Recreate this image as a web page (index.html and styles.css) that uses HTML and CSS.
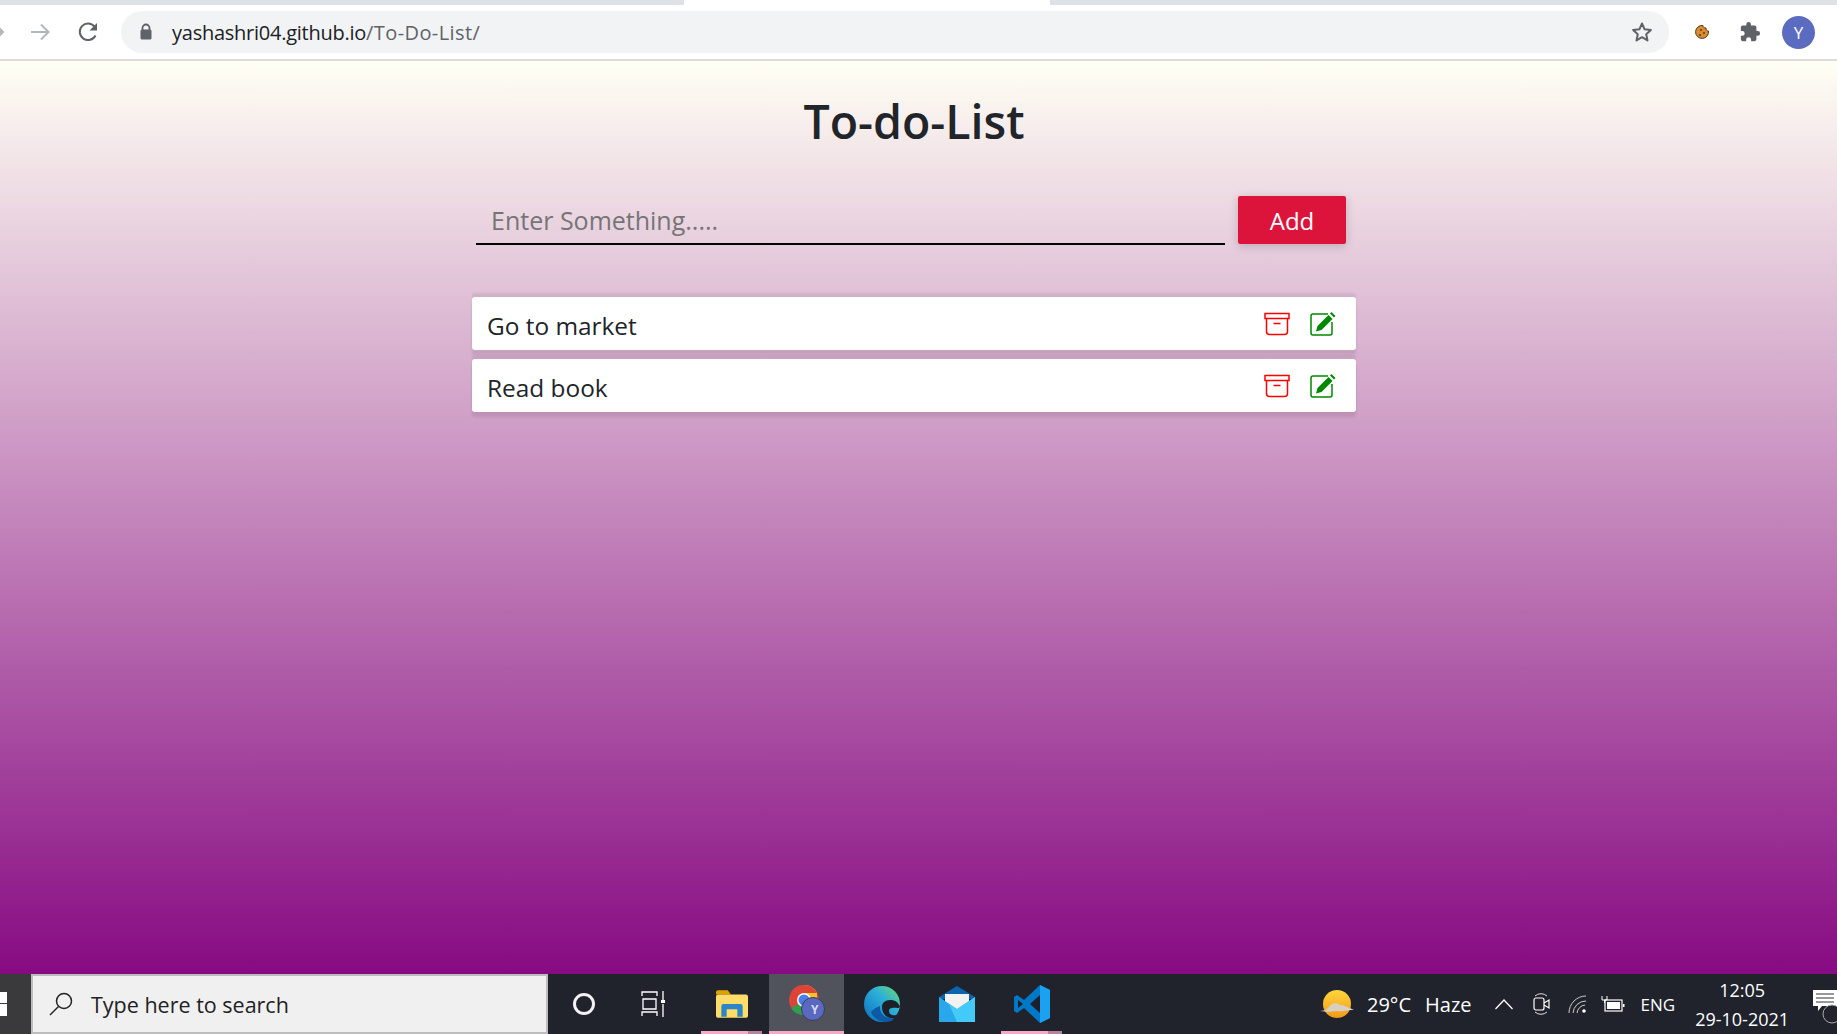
FILE: index.html
```html
<!DOCTYPE html>
<html lang="en">
<head>
    <meta charset="UTF-8">
    <title>To-do-List</title>
    <link rel="stylesheet" href="styles.css">
</head>
<body>
    <div class="tabstrip">
        <div class="tab-active"></div>
    </div>
    <div class="toolbar">
        <svg class="nav-back" width="10" height="24" viewBox="0 0 10 24"><path d="M-6 12H3M-2 7l5 5-5 5" fill="none" stroke="#b4b6b9" stroke-width="2"/></svg>
        <svg class="nav-forward" width="24" height="24" viewBox="0 0 24 24"><path d="M3 12h17M13 4.500l7.500 7.500-7.500 7.500" fill="none" stroke="#b4b6b9" stroke-width="2"/></svg>
        <svg class="nav-reload" width="24" height="24" viewBox="0 0 24 24"><path d="M19.500 15.500A8.300 8.300 0 1 1 18.500 6.500" fill="none" stroke="#5f6368" stroke-width="2"/><path d="M21 3v7.500h-7.500z" fill="#5f6368"/></svg>
        <div class="omnibox">
            <svg class="lock" width="14" height="18" viewBox="0 0 14 18"><path d="M3.500 7V5a3.500 3.500 0 0 1 7 0v2" fill="none" stroke="#5f6368" stroke-width="1.800"/><rect x="1.500" y="6.500" width="11" height="10" rx="1.500" fill="#5f6368"/></svg>
            <span class="url"><span class="host">yashashri04.github.io</span><span class="path">/To-Do-List/</span></span>
            <svg class="star" width="24" height="24" viewBox="0 0 24 24"><path d="M12 3.500l2.600 5.800 6.300.7-4.700 4.200 1.300 6.200-5.500-3.200-5.500 3.200 1.300-6.200L3.100 10l6.300-.7z" fill="none" stroke="#5f6368" stroke-width="2" stroke-linejoin="round"/></svg>
        </div>
        <svg class="cookie" width="16" height="16" viewBox="0 0 16 16"><path d="M9 1.500a2.500 2.500 0 0 0 3 2.500 2.500 2.500 0 0 0 2.500 3A6.500 6.500 0 1 1 9 1.500z" fill="#d98a35" stroke="#5c3a12"/><circle cx="7" cy="6" r="1" fill="#5c3a12"/><circle cx="10" cy="9" r="1" fill="#5c3a12"/><circle cx="6" cy="11" r="1" fill="#5c3a12"/></svg>
        <svg class="puzzle" width="22" height="22" viewBox="0 0 24 24"><path d="M20.500 11H19V7a2 2 0 0 0-2-2h-4V3.500a2.500 2.500 0 0 0-5 0V5H4a2 2 0 0 0-2 2v3.800h1.500a2.700 2.700 0 0 1 0 5.400H2V20a2 2 0 0 0 2 2h3.800v-1.500a2.700 2.700 0 0 1 5.400 0V22H17a2 2 0 0 0 2-2v-4h1.500a2.500 2.500 0 0 0 0-5z" fill="#5f6368"/></svg>
        <div class="avatar">Y</div>
    </div>
    <div class="toolbar-line"></div>

    <main class="page">
        <div class="todo">
            <h1 class="title">To-do-List</h1>
            <form class="add-form">
                <input class="add-input" type="text" placeholder="Enter Something.....">
                <button class="add-btn" type="button">Add</button>
            </form>
            <ul class="todo-list">
                <li class="todo-item">
                    <span class="todo-text">Go to market</span>
                    <svg class="icon-archive" width="26" height="24" viewBox="0 0 26 24"><rect x="1" y="1.500" width="24" height="5" fill="none" stroke="#f00" stroke-width="1.500"/><path d="M2.500 6.500v13a3 3 0 0 0 3 3h15a3 3 0 0 0 3-3v-13M9.500 11.500h7" fill="none" stroke="#f00" stroke-width="1.500"/></svg>
                    <svg class="icon-edit" width="26" height="24" viewBox="0 0 26 24"><path d="M18 2H3a2 2 0 0 0-2 2v17a2 2 0 0 0 2 2h17a2 2 0 0 0 2-2V10" fill="none" stroke="#080" stroke-width="1.500"/><path d="M6 19.500l1.500-5.500L18.500 3l4 4L11.500 18zM20 1.500L21.500 0l4 4L24 5.500z" fill="#080"/></svg>
                </li>
                <li class="todo-item">
                    <span class="todo-text">Read book</span>
                    <svg class="icon-archive" width="26" height="24" viewBox="0 0 26 24"><rect x="1" y="1.500" width="24" height="5" fill="none" stroke="#f00" stroke-width="1.500"/><path d="M2.500 6.500v13a3 3 0 0 0 3 3h15a3 3 0 0 0 3-3v-13M9.500 11.500h7" fill="none" stroke="#f00" stroke-width="1.500"/></svg>
                    <svg class="icon-edit" width="26" height="24" viewBox="0 0 26 24"><path d="M18 2H3a2 2 0 0 0-2 2v17a2 2 0 0 0 2 2h17a2 2 0 0 0 2-2V10" fill="none" stroke="#080" stroke-width="1.500"/><path d="M6 19.500l1.500-5.500L18.500 3l4 4L11.500 18zM20 1.500L21.500 0l4 4L24 5.500z" fill="#080"/></svg>
                </li>
            </ul>
        </div>
    </main>

    <footer class="taskbar">
        <div class="start">
            <span class="win-logo"></span>
        </div>
        <div class="search">
            <svg width="26" height="26" viewBox="0 0 26 26"><circle cx="16" cy="10" r="7.500" fill="none" stroke="#222" stroke-width="1.500"/><path d="M10.500 15.500L2 24" stroke="#222" stroke-width="1.500"/></svg>
            <span>Type here to search</span>
        </div>
        <div class="task-icons">
            <div class="task cortana"><span class="ring"></span></div>
            <div class="task task-view">
                <svg width="24" height="26" viewBox="0 0 24 26"><path d="M1 5V1h15v4M1 25v-4h15v4M2 8h13v10H2zM22 0v9M22 13v13" fill="none" stroke="#fff" stroke-width="1.300"/><rect x="20" y="9" width="4" height="3" fill="#fff"/></svg>
            </div>
            <div class="task running">
                <svg width="32" height="28" viewBox="0 0 30 26"><path d="M0 2a2 2 0 0 1 2-2h9l3 4H0z" fill="#e0a100"/><rect y="4" width="30" height="22" rx="2" fill="#fddc6a"/><path d="M5 25V15a2 2 0 0 1 2-2h16a2 2 0 0 1 2 2v10h-5v-7H10v7z" fill="#2b86c8"/></svg>
            </div>
            <div class="task current">
                <svg width="38" height="38" viewBox="0 0 38 38"><circle cx="16" cy="16" r="15" fill="#db4437"/><path d="M3 24a15 15 0 0 0 13 7l8-14H16z" fill="#2e9e50"/><path d="M16 1a15 15 0 0 1 13 8v9H16z" fill="#f6c02c"/><path d="M16 1a15 15 0 0 0-13 7l6 8 7-7h13a15 15 0 0 0-13-8z" fill="#db4437"/><circle cx="16" cy="16" r="7" fill="#fff"/><circle cx="16" cy="16" r="5.500" fill="#4a7fe8"/><circle cx="25" cy="25" r="11.500" fill="#5b68c0" stroke="#3b3e55"/></svg>
                <span class="chrome-letter">Y</span>
            </div>
            <div class="task">
                <svg width="36" height="38" viewBox="0 0 36 38"><defs><linearGradient id="edge" x1="0" y1="1" x2="1" y2="0"><stop offset="0" stop-color="#0a6fc0"/><stop offset=".6" stop-color="#2db0d8"/><stop offset="1" stop-color="#6fdc6a"/></linearGradient></defs><circle cx="18" cy="19" r="18" fill="url(#edge)"/><path d="M36 22c-2-6-6-7-10-7-5 0-8 3-8 7 0 7 5 12 12 11l3-3c-4 1-8 0-8-4 0-2 1-3 3-3 3-1 6 1 8-1z" fill="#1e2029"/><path d="M7 27c3 8 12 12 20 9 1 0 2-1 3-3-7 1-15-3-14-12-3 1-7 3-9 6z" fill="#0c59a4"/></svg>
            </div>
            <div class="task">
                <svg width="36" height="36" viewBox="0 0 36 36"><path d="M0 11L18 0l18 11v2H0z" fill="#0a64b0"/><path d="M6 8h24v10L18 24 6 18z" fill="#f2f2f2"/><path d="M0 11l18 12 18-12v25H0z" fill="#28a8ea"/><path d="M36 11v25H18L10 18l8 5z" fill="#50d9ff" opacity=".7"/></svg>
            </div>
            <div class="task running">
                <svg width="36" height="38" viewBox="0 0 36 38"><path d="M26 0l10 5v28l-10 5-16-15-7 5-3-2v-14l3-2 7 5z" fill="#0078c8"/><path d="M26 0l10 5v28l-10 5z" fill="#1ba1f2"/><path d="M26 10v18l-10-9z" fill="#1e2029"/><path d="M4 15l5 4-5 4z" fill="#1e2029"/></svg>
            </div>
        </div>
        <div class="tray">
            <svg class="weather" width="36" height="30" viewBox="0 0 36 30"><defs><linearGradient id="sun" x1="0" y1="0" x2="0" y2="1"><stop offset="0" stop-color="#ffd53d"/><stop offset="1" stop-color="#f29a17"/></linearGradient></defs><circle cx="18" cy="15" r="14" fill="url(#sun)"/><path d="M1 22c5-1 6-1 8-3 3-5 8-6 12-3 4 0 8 2 14 5-10 0-10 2-17 1-7 1-10 1-17 0z" fill="#d8cfc0"/></svg>
            <span class="weather-text">29°C</span>
            <span class="weather-text haze">Haze</span>
            <svg class="chevron" width="20" height="12" viewBox="0 0 20 12"><path d="M1.500 11L10 2l8.500 9" fill="none" stroke="#fff" stroke-width="1.300"/></svg>
            <svg class="meet" width="18" height="24" viewBox="0 0 18 24"><path d="M2 4a9 9 0 0 1 12 0M2 20a9 9 0 0 0 12 0" fill="none" stroke="#ddd"/><rect x="1" y="6" width="10" height="12" rx="2" fill="none" stroke="#fff" stroke-width="1.200"/><path d="M11 11l5-3v8l-5-3" fill="none" stroke="#fff" stroke-width="1.200"/></svg>
            <svg class="wifi" width="20" height="20" viewBox="0 0 20 20"><path d="M1 19A17 17 0 0 1 18 2M5 19A13 13 0 0 1 18 7M9 19a9 9 0 0 1 8-8" fill="none" stroke="#ccc"/><circle cx="16" cy="17" r="1.800" fill="#fff"/></svg>
            <svg class="battery" width="24" height="18" viewBox="0 0 24 18"><path d="M1 1v4h5V1M3.500 5v3" fill="none" stroke="#fff"/><rect x="4" y="5" width="17" height="11" fill="none" stroke="#fff" stroke-width="1.200"/><rect x="6" y="7" width="13" height="7" fill="#fff"/><rect x="22" y="9" width="1.500" height="3" fill="#fff"/></svg>
            <span class="lang">ENG</span>
            <div class="clock">
                <span>12:05</span>
                <span>29-10-2021</span>
            </div>
            <div class="notify">
                <svg width="24" height="34" viewBox="0 0 24 34"><path d="M0 0h24v16H9l-4 5v-5H0z" fill="#fff"/><path d="M3 4h18M3 8h18M3 12h18" stroke="#333" stroke-width="1.200"/><circle cx="19" cy="24" r="9" fill="#20232c" stroke="#aaa"/></svg>
            </div>
        </div>
    </footer>
</body>
</html>
```

FILE: styles.css
```css
* {
    box-sizing: border-box;
}
html, body {
    height: 100%;
}
body {
    margin: 0;
    display: flex;
    flex-direction: column;
    overflow: hidden;
    font-family: "Open Sans", "Noto Sans", Arial, sans-serif;
    background-color: #fff;
}

/* browser chrome */
.tabstrip {
    height: 5px;
    flex: none;
    background-color: #dee1e6;
    padding-left: 684px;
}
.tab-active {
    width: 366px;
    height: 5px;
    background-color: #fff;
}
.toolbar {
    height: 54px;
    flex: none;
    display: flex;
    align-items: center;
    background-color: #fff;
}
.toolbar-line {
    height: 2px;
    flex: none;
    background-color: #dadce0;
}
.nav-forward {
    margin-left: 18px;
}
.nav-reload {
    margin-left: 24px;
}
.omnibox {
    width: 1548px;
    height: 42px;
    margin-left: 21px;
    padding: 0 15px 0 18px;
    display: flex;
    align-items: center;
    background-color: #f1f3f4;
    border-radius: 21px;
}
.lock {
    margin-right: 19px;
}
.url {
    flex: 1;
    font-size: 20px;
    letter-spacing: -0.25px;
}
.host {
    color: #202124;
}
.path {
    color: #5f6368;
    letter-spacing: 0.4px;
}
.cookie {
    margin-left: 25px;
}
.puzzle {
    margin-left: 29px;
}
.avatar {
    width: 33px;
    height: 33px;
    margin-left: 21px;
    border-radius: 50%;
    background-color: #5b6bc0;
    color: #fff;
    font-size: 17px;
    display: flex;
    align-items: center;
    justify-content: center;
}

/* page */
.page {
    flex: 1;
    background: linear-gradient(to bottom, #fffff4, #870a82);
    padding-left: 472px;
}
.todo {
    width: 884px;
}
.title {
    margin: 0;
    padding-top: 31px;
    text-align: center;
    font-size: 46.5px;
    font-weight: 600;
    line-height: 58px;
    color: #212529;
}
.add-form {
    display: flex;
    margin-top: 46px;
    padding: 0 10px 0 4px;
}
.add-input {
    width: 749px;
    height: 49px;
    padding: 0 15px;
    border: none;
    border-bottom: 2px solid #000;
    background: transparent;
    outline: none;
    font-family: inherit;
    font-size: 25px;
    color: #212529;
}
.add-input::placeholder {
    color: #757575;
}
.add-btn {
    width: 108px;
    height: 48px;
    margin-left: 13px;
    border: none;
    border-radius: 2px;
    background-color: #dc143c;
    color: #fff;
    font-family: inherit;
    font-size: 24px;
    box-shadow: 0 2px 10px rgba(0, 0, 0, 0.18);
}
.todo-list {
    list-style: none;
    margin: 52px 0 0;
    padding: 0;
    display: flex;
    flex-direction: column;
    gap: 9px;
}
.todo-item {
    height: 53px;
    padding: 0 20px 0 15px;
    display: flex;
    align-items: center;
    gap: 20px;
    background-color: #fff;
    border-radius: 3px;
    box-shadow: 0 5px 3px rgba(0, 0, 0, 0.09), 0 -4px 2px rgba(0, 0, 0, 0.07);
}
.todo-text {
    flex: 1;
    padding-top: 3px;
    font-size: 24.4px;
    color: #212529;
}

/* windows taskbar */
.taskbar {
    height: 60px;
    flex: none;
    display: flex;
    color: #fff;
    background-color: #20232c;
}
.start {
    width: 31px;
    flex: none;
    display: flex;
    align-items: center;
    background-color: #3a3a3c;
}
.win-logo {
    width: 7px;
    height: 24px;
    background: linear-gradient(to bottom, #fff 45%, #3a3a3c 45%, #3a3a3c 52%, #fff 52%);
}
.search {
    width: 517px;
    flex: none;
    display: flex;
    align-items: center;
    gap: 17px;
    padding-left: 15px;
    background-color: #f0f0f0;
    border: 2px solid #bdbdbd;
    color: #222;
    font-size: 21.5px;
}
.task-icons {
    display: flex;
}
.task {
    width: 75px;
    position: relative;
    display: flex;
    align-items: center;
    justify-content: center;
}
.task.cortana {
    width: 71px;
}
.task-view svg {
    margin-right: 7px;
}
.task.running::after {
    content: "";
    position: absolute;
    left: 7px;
    right: 7px;
    bottom: 0;
    height: 3px;
    background: linear-gradient(to right, #f7a8c4 77%, #b5839d 77%);
}
.task.current {
    background-color: #50525c;
    border-bottom: 3px solid #f7a8c4;
}
.ring {
    width: 22px;
    height: 22px;
    border: 3px solid #f2f2f2;
    border-radius: 50%;
}
.chrome-letter {
    position: absolute;
    left: 42px;
    top: 27px;
    font-size: 12px;
    font-weight: 700;
    color: #d8daf0;
}
.tray {
    flex: 1;
    display: flex;
    align-items: center;
    padding-left: 250px;
    font-size: 20px;
}
.weather-text {
    margin-left: 12px;
}
.haze {
    margin-left: 14px;
}
.chevron {
    margin-left: 22px;
}
.meet {
    margin-left: 19px;
}
.wifi {
    margin-left: 17px;
}
.battery {
    margin-left: 13px;
}
.lang {
    margin-left: 16px;
    font-size: 17px;
}
.clock {
    margin-left: 20px;
    display: flex;
    flex-direction: column;
    align-items: center;
    gap: 5px;
    font-size: 18px;
}
.notify {
    margin-left: 24px;
    height: 40px;
    display: flex;
    align-items: flex-end;
    flex: none;
}
```
